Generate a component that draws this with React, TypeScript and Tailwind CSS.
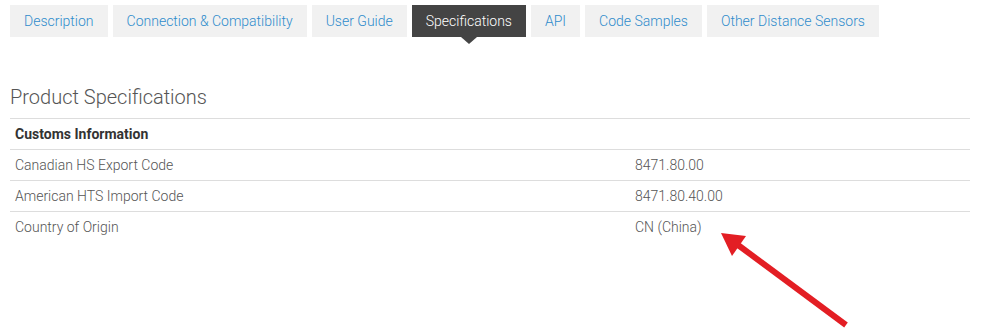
import React from "react";

const tabs = [
  "Description",
  "Connection & Compatibility",
  "User Guide",
  "Specifications",
  "API",
  "Code Samples",
  "Other Distance Sensors",
];

const rows = [
  ["Canadian HS Export Code", "8471.80.00"],
  ["American HTS Import Code", "8471.80.40.00"],
  ["Country of Origin", "CN (China)"],
];

export default function App() {
  return (
    <div
      className="relative w-[989px] h-[330px] bg-white overflow-hidden"
      style={{ fontFamily: "Roboto, 'Liberation Sans', sans-serif" }}
    >
      <div className="flex gap-[5px] pl-[10px] pt-[5px]">
        {tabs.map((t) => {
          const active = t === "Specifications";
          return (
            <div
              key={t}
              className={
                "relative h-[32px] px-[14px] flex items-center text-[14px] font-light " +
                (active ? "bg-[#444444] text-white" : "bg-[#f1f1f1] text-[#2f8ccc]")
              }
            >
              {t}
              {active && (
                <div className="absolute left-1/2 -translate-x-1/2 top-full w-0 h-0 border-l-[8px] border-r-[8px] border-t-[7px] border-l-transparent border-r-transparent border-t-[#444444]" />
              )}
            </div>
          );
        })}
      </div>

      <div className="px-[10px] pt-[48px]">
        <h2 className="text-[20px] font-light text-[#555555] leading-[24px] mb-[9px]">
          Product Specifications
        </h2>
        <div className="w-[960px] border-t border-[#dddddd]">
          <div className="h-[31px] flex items-center px-[5px] text-[14px] font-bold text-[#333333] border-b border-[#dddddd]">
            Customs Information
          </div>
          {rows.map(([k, v], i) => (
            <div
              key={k}
              className={
                "h-[31px] flex items-center text-[14px] font-light text-[#555555] " +
                (i < rows.length - 1 ? "border-b border-[#dddddd]" : "")
              }
            >
              <div className="w-[625px] pl-[5px]">{k}</div>
              <div>{v}</div>
            </div>
          ))}
        </div>
      </div>

      <svg
        className="absolute left-0 top-0"
        width="989"
        height="330"
        viewBox="0 0 989 330"
      >
        <line x1="846" y1="325" x2="738" y2="245" stroke="#e31e24" strokeWidth="6" />
        <polygon points="721,233 746,236 732,256" fill="#e31e24" />
      </svg>
    </div>
  );
}
